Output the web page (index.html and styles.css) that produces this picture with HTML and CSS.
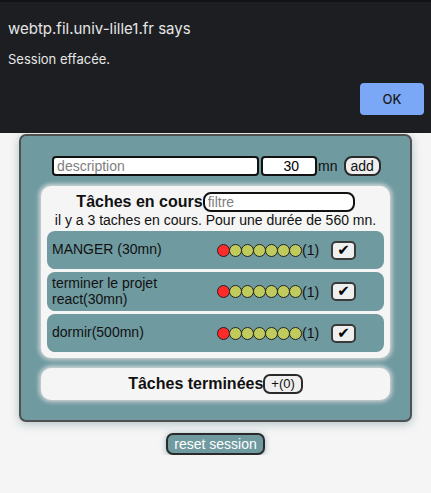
FILE: index.html
```html
<!DOCTYPE html>
<html lang="fr">
<head>
  <meta charset="UTF-8" />
  <meta name="viewport" content="width=device-width, initial-scale=1.0"/>
  <title>Tâches</title>
  <link rel="stylesheet" href="styles.css">
</head>
<body>
  <div class="page">
    <div class="todo">
      <form class="add-form">
        <input type="text" class="desc" placeholder="description" />
        <input type="number" class="duration" value="30" />
        <span class="unit">mn</span>
        <button type="button" class="btn">add</button>
      </form>

      <!-- Tâches en cours -->
      <section class="panel">
        <div class="panel-head">
          <h2>Tâches en cours</h2>
          <input type="text" class="filter" placeholder="filtre" />
        </div>
        <p class="info">il y a 3 taches en cours. Pour une durée de 560 mn.</p>
        <div class="task">
          <span class="task-name">MANGER (30mn)</span>
          <span class="prio">
            <i class="dot red"></i><i class="dot"></i><i class="dot"></i><i class="dot"></i><i class="dot"></i><i class="dot"></i><i class="dot"></i><span class="level">(1)</span>
          </span>
          <button type="button" class="check">&#10004;</button>
        </div>
        <div class="task">
          <span class="task-name">terminer le projet react(30mn)</span>
          <span class="prio">
            <i class="dot red"></i><i class="dot"></i><i class="dot"></i><i class="dot"></i><i class="dot"></i><i class="dot"></i><i class="dot"></i><span class="level">(1)</span>
          </span>
          <button type="button" class="check">&#10004;</button>
        </div>
        <div class="task">
          <span class="task-name">dormir(500mn)</span>
          <span class="prio">
            <i class="dot red"></i><i class="dot"></i><i class="dot"></i><i class="dot"></i><i class="dot"></i><i class="dot"></i><i class="dot"></i><span class="level">(1)</span>
          </span>
          <button type="button" class="check">&#10004;</button>
        </div>
      </section>

      <!-- Tâches terminées -->
      <section class="panel">
        <div class="panel-head">
          <h2>Tâches terminées</h2>
          <button type="button" class="btn small">+(0)</button>
        </div>
      </section>
    </div>
    <div class="reset-wrap">
      <button type="button" class="reset">reset session</button>
    </div>
  </div>

  <!-- alert box -->
  <div class="alert">
    <div class="alert-title">webtp.fil.univ-lille1.fr says</div>
    <div class="alert-msg">Session effacée.</div>
    <div class="alert-actions">
      <button type="button" class="alert-ok">OK</button>
    </div>
  </div>
</body>
</html>
```

FILE: styles.css
```css
body { margin: 0; background: #f5f5f5; font-family: 'Liberation Sans', Arial, sans-serif; font-size: 14px; color: #111; }
.page { padding-top: 134px; }
.todo { width: 389px; margin: 0 auto; background: #6f9aa0; border: 2px solid #505050; border-radius: 7px; padding: 20px 0; box-shadow: 0 2px 10px rgba(90, 130, 140, 0.45); }
.add-form { display: flex; justify-content: center; align-items: center; margin: 0 0 10px 2px; }
.add-form input { font-family: inherit; font-size: 14px; height: 20px; box-sizing: border-box; border: 2px solid #111; border-radius: 4px; background: #fff; padding: 0 3px; outline: none; }
.desc { width: 207px; margin-right: 2px; }
.desc::placeholder, .filter::placeholder { color: #808080; }
.duration { width: 56px; text-align: right; padding-right: 16px !important; -moz-appearance: textfield; }
.duration::-webkit-inner-spin-button, .duration::-webkit-outer-spin-button { -webkit-appearance: none; margin: 0; }
.unit { margin: 0 6px 0 1px; }
.btn { font-family: inherit; font-size: 14px; height: 20px; padding: 0 5px; background: #efefef; color: #111; border: 2px solid #2a2a2a; border-radius: 8px; line-height: 16px; }
.btn.small { font-size: 13px; padding: 0 6px; border-radius: 7px; }
.panel { margin: 0 20px 10px; padding: 6px; background: #f5f5f5; border-radius: 10px; box-shadow: 0 0 4px 2px rgba(235, 235, 235, 0.85), 0 1px 3px 1px rgba(60, 80, 85, 0.35); }
.panel:last-child { margin-bottom: 0; }
.panel-head { display: flex; justify-content: center; align-items: center; height: 20px; }
.panel-head h2 { margin: 0; font-size: 16px; font-weight: bold; }
.filter { font-family: inherit; font-size: 14px; width: 152px; height: 20px; box-sizing: border-box; border: 2px solid #111; border-radius: 8px; padding: 0 3px; background: #fff; outline: none; }
.info { margin: 0 0 3px; text-align: center; line-height: 16px; }
.task { display: flex; align-items: center; min-height: 30px; padding: 4px 5px; margin-bottom: 3px; background: #6f9aa0; border-radius: 8px; }
.task:last-child { margin-bottom: 0; }
.task-name { width: 160px; flex: none; line-height: 15.5px; margin-right: 5px; }
.prio { display: flex; align-items: center; flex: none; }
.dot { display: block; flex: none; width: 13px; height: 13px; box-sizing: border-box; border: 1px solid #222; border-radius: 50%; background: #c0cb5e; margin-right: -1px; }
.dot.red { background: #ff2a2a; }
.level { margin-left: 1px; }
.check { flex: none; margin-left: 12px; width: 25px; height: 19px; padding: 0; background: #efefef; border: 2px solid #3a3a3a; border-radius: 5px; font-family: 'DejaVu Sans', sans-serif; font-size: 15px; line-height: 15px; color: #000; }
.reset-wrap { display: flex; justify-content: center; margin-top: 11px; }
.reset { font-family: inherit; font-size: 14px; height: 22px; padding: 0 6px; background: #6f9aa0; color: #fff; border: 2px solid #2a2a2a; border-radius: 7px; box-shadow: 0 1px 6px rgba(90, 140, 150, 0.6); }
.alert { position: absolute; top: 0; left: 0; right: 0; height: 133px; box-sizing: border-box; background: #1d1e22; border-top: 2px solid #121214; padding: 18px 7px 0 8px; font-family: Inter, 'Liberation Sans', sans-serif; color: #e6e6e6; }
.alert-title { font-size: 15px; line-height: 18px; }
.alert-msg { font-size: 13px; line-height: 16px; margin-top: 13px; }
.alert-actions { display: flex; justify-content: flex-end; margin-top: 16px; }
.alert-ok { width: 64px; height: 32px; background: #7aa8f6; border: none; border-radius: 4px; font-family: Inter, 'Liberation Sans', sans-serif; font-size: 13px; font-weight: 500; color: #1a1a1a; }
```
